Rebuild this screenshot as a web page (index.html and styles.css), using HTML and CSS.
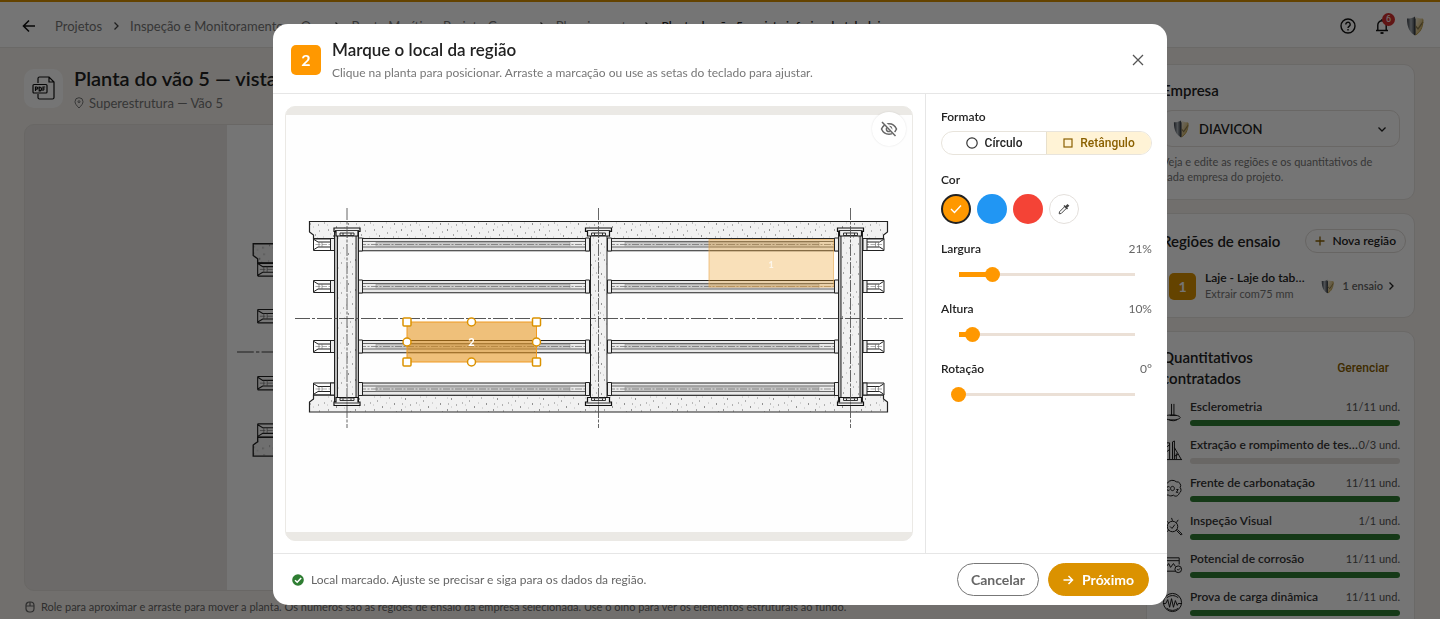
FILE: index.html
```html
<!DOCTYPE html>
<html lang="pt-BR">
<head>
<meta charset="utf-8">
<meta name="viewport" content="width=device-width, initial-scale=1">
<title>Planta do vão 5</title>
<link rel="stylesheet" href="styles.css">
</head>
<body>
<svg class="defs" aria-hidden="true">
  <defs>
    <linearGradient id="shield-l" x1="0" x2="1"><stop offset="0" stop-color="#3c424b"/><stop offset=".5" stop-color="#aeb4bb"/><stop offset="1" stop-color="#3c424b"/></linearGradient>
    <linearGradient id="shield-r" x1="0" x2="1" y1="0" y2="1"><stop offset="0" stop-color="#f3f0e6"/><stop offset="1" stop-color="#c8a03c"/></linearGradient>
    <pattern id="specks" width="46" height="30" patternUnits="userSpaceOnUse">
      <rect width="46" height="30" fill="#f1f1f1"/>
      <path d="M3 4h1M9 11h.7M15 3h.8M14 17h1M21 8h.6M26 14h1M30 4h.8M37 9h1M42 15h.7M44 3h.6M6 20h.8M11 26h1M19 23h.7M25 27h.6M33 20h1M39 25h.8M43 21h.6M2 13h.6M34 14h.6M28 22h.6" stroke="#333"/>
      <path d="M6 7h.7M12 7h.6M18 13h.7M24 5h.6M33 8h.6M40 5h.7M5 15h.6M22 18h.6M37 17h.6M8 24h.6M16 28h.6M30 27h.6M41 28h.6M1 27h.6" stroke="#999"/>
    </pattern>
    <g id="stub">
      <path d="M313.500-6V6M313.500-6h21M313.500 6h21M314-5l4 2.500h12.500M314 5l4-2.500h12.500" fill="none" stroke="#222"/>
      <path d="M315.500 0h18" stroke="#777" stroke-width=".6" stroke-dasharray="5 1.500"/>
      <path d="M319-2.500v5M322-2.500v5" stroke="#666" stroke-width=".6"/>
      <rect x="330.500" y="-6" width="4" height="12" fill="#eee" stroke="#222"/>
    </g>
    <g id="span">
      <rect x="358.500" y="-6" width="231.500" height="12" fill="#e9e9e9"/>
      <path d="M358-6h232M358 6.200h232" stroke="#222" stroke-width="1.100"/>
      <path d="M363-3h222M363 2.500h222" stroke="#444" stroke-width=".8"/>
      <rect x="376" y="-2" width="194" height="4" fill="#cacaca" stroke="#888" stroke-width=".5"/>
      <path d="M359 0h228" stroke="#555" stroke-width=".6" stroke-dasharray="7 1.500 2 1.500"/>
      <path d="M358.500-6.500h4v13h-4zM585.500-6.500h4v13h-4z" fill="#eee" stroke="#222"/>
    </g>
    <g id="beam"><use href="#stub"/><use href="#span"/><use href="#span" x="249"/><use href="#stub" transform="translate(1197.500 0) scale(-1 1)"/></g>
    <g id="cap">
      <path d="M-13-4h26v3.500h-2V4h-22V-.5h-2z" fill="#eee" stroke="#111" stroke-width="1.200"/>
      <path d="M-12-1.500h24M-7 1h14v2.500h-14zM-4 1v2M4 1v2" fill="none" stroke="#222" stroke-width=".9"/>
    </g>
    <symbol id="plan" viewBox="286 115 626 417">
      <rect x="286" y="115" width="626" height="417" fill="#fefefe"/>
      <path d="M309.500 221.500h578V232l-4 3v4h-570v-4l-4-3z" fill="url(#specks)" stroke="#222" stroke-width="1.200"/>
      <path d="M309.500 412h578v-10l-4-3v-4h-570v4l-4 3z" fill="url(#specks)" stroke="#222" stroke-width="1.200"/>
      <use href="#beam" y="244.500"/><use href="#beam" y="286.500"/><use href="#beam" y="346.500"/><use href="#beam" y="389"/>
      <path d="M334.500 232h24v170h-24zM838.500 232h24v170h-24z" fill="#bbb" stroke="#222"/>
      <path d="M337.500 232h18.500v170h-18.500zM590.500 232h16.500v170h-16.500zM841 232h19v170h-19z" fill="url(#specks)" stroke="#222"/>
      <use href="#cap" x="347" y="232"/><use href="#cap" x="598.500" y="232"/><use href="#cap" x="850.500" y="232"/>
      <use href="#cap" transform="translate(347 401.500) scale(1 -1)"/><use href="#cap" transform="translate(598.500 401.500) scale(1 -1)"/><use href="#cap" transform="translate(850.500 401.500) scale(1 -1)"/>
      <path d="M347 208v220M598.500 208v220M850.500 208v220" stroke="#555" stroke-width=".9" stroke-dasharray="12 1.500 3 1.500"/>
      <path d="M295 318.500h608" stroke="#444" stroke-width=".9" stroke-dasharray="15 2 3 2"/>
    </symbol>
    <symbol id="shield" viewBox="0 0 18 20">
      <path d="M1 2.500C4 2.700 6.500 2 9 .5V19.500C4 16.500 1 12 1 2.500z" fill="url(#shield-l)"/>
      <path d="M9 .5c2.500 1.500 5 2.200 8 2C17 12 14 16.500 9 19.500z" fill="url(#shield-r)"/>
      <path d="M9 19V2.500" stroke="#333a43" stroke-width="1.200"/>
      <path d="M9.500 10l2.500 3L17 6" fill="none" stroke="#8a7a50" stroke-width="1.300"/>
      <path d="M17 3.500C17 12 14 16.500 9.500 19" fill="none" stroke="#b99a44" stroke-width="1"/>
    </symbol>
    <symbol id="right" viewBox="0 0 12 12"><path d="M4.500 2.500L8 6 4.500 9.500" fill="none" stroke="currentColor" stroke-width="1.300"/></symbol>
    <symbol id="down" viewBox="0 0 12 12"><path d="M2.500 4.500L6 8l3.500-3.500" fill="none" stroke="currentColor" stroke-width="1.300"/></symbol>
  </defs>
</svg>

<div class="page">
  <header class="topbar">
    <button class="icon-btn back" aria-label="Voltar"><svg width="14" height="14" viewBox="0 0 14 14"><path d="M13 7H1.500M7 1.500L1.500 7 7 12.500" fill="none" stroke="#111" stroke-width="1.600"/></svg></button>
    <nav class="crumbs" aria-label="Navegação">
      <a href="#">Projetos</a><svg class="sep"><use href="#right"/></svg>
      <a href="#">Inspeção e Monitoramento — Oes</a><svg class="sep"><use href="#right"/></svg>
      <a href="#">Ponte Marítima Projeto Gomes</a><svg class="sep"><use href="#right"/></svg>
      <a href="#">Planejamento</a><svg class="sep"><use href="#right"/></svg>
      <b>Planta do vão 5 — vista inferior do tabuleiro</b>
    </nav>
    <div class="top-actions">
      <button class="icon-btn" aria-label="Ajuda"><svg width="16" height="16" viewBox="0 0 16 16" fill="none" stroke="#111" stroke-width="1.400"><circle cx="8" cy="8" r="7"/><path d="M5.800 6.500a2.200 2.200 0 1 1 3.500 1.700c-.9.600-1.300 1-1.300 1.800M8 11v1.500"/></svg></button>
      <button class="icon-btn bell" aria-label="Notificações"><svg width="14" height="16" viewBox="0 0 14 16" fill="none" stroke="#111" stroke-width="1.400"><path d="M1 12.500h12M2.800 12.500V7a4.200 4.200 0 0 1 8.400 0v5.500M7 1v1.800"/><path d="M5.500 15h3" stroke-width="1.800"/></svg><span class="count">6</span></button>
      <svg class="shield" width="18" height="20"><use href="#shield"/></svg>
    </div>
  </header>

  <div class="content">
    <main class="main">
      <div class="plan-head">
        <span class="pdf"><svg width="24" height="26" viewBox="0 0 24 26" fill="none" stroke="#111" stroke-width="1.200"><path d="M6 8V3.500A1.500 1.500 0 0 1 7.500 2H17l5 5v15.500a1.500 1.500 0 0 1-1.500 1.500h-13A1.500 1.500 0 0 1 6 22.500V19M17 2v5h5"/><rect x="1" y="9.500" width="14" height="8.500" rx="1"/><path d="M3.500 16v-4h1.200a1 1 0 0 1 0 2.200H3.500M7.200 12v4c3 0 3-4 0-4zM11 16v-4h2.200M11 14h1.800"/></svg></span>
        <div>
          <h1>Planta do vão 5 — vista inferior do tabuleiro</h1>
          <p class="place"><svg width="10" height="12" viewBox="0 0 10 12" fill="none" stroke="currentColor"><path d="M5 11C2.500 8.500 1 6.500 1 4.700a4 4 0 0 1 8 0C9 6.500 7.500 8.500 5 11z"/><circle cx="5" cy="4.700" r="1"/></svg>Superestrutura — Vão 5</p>
        </div>
      </div>
      <div class="viewer"><svg class="viewer-plan" viewBox="0 0 626 417"><use href="#plan" width="626" height="417"/></svg></div>
      <p class="hint"><svg width="10" height="12" viewBox="0 0 10 12" fill="none" stroke="currentColor" stroke-width="1.200"><rect x="1" y="1" width="8" height="10" rx="3.500"/><path d="M1 5h8M5 1v4"/></svg>Role para aproximar e arraste para mover a planta. Os números são as regiões de ensaio da empresa selecionada. Use o olho para ver os elementos estruturais ao fundo.</p>
    </main>

    <aside class="rail">
      <section class="card">
        <h2><label for="empresa">Empresa</label></h2>
        <div class="company">
          <svg class="shield" width="16" height="18"><use href="#shield"/></svg>
          <select id="empresa"><option>DIAVICON</option></select>
          <svg class="chev"><use href="#down"/></svg>
        </div>
        <p class="note">Veja e edite as regiões e os quantitativos de cada empresa do projeto.</p>
      </section>

      <section class="card regions">
        <div class="card-head"><h2>Regiões de ensaio</h2><button class="new"><svg width="10" height="10" viewBox="0 0 10 10"><path d="M5 .5v9M.5 5h9" stroke="#8a6000" stroke-width="1.300"/></svg>Nova região</button></div>
        <div class="region-row">
          <span class="num">1</span>
          <div class="region-text"><b>Laje - Laje do tabuleiro</b><span>Extrair com75 mm</span></div>
          <svg class="shield" width="13" height="15"><use href="#shield"/></svg>
          <span class="tests">1 ensaio</span><svg class="sep"><use href="#right"/></svg>
        </div>
      </section>

      <section class="card quant">
        <div class="card-head"><h2>Quantitativos contratados</h2><button class="manage">Gerenciar</button></div>
        <ul class="tests-list">
          <li><svg class="ti" viewBox="0 0 22 22"><path d="M10 2v12M12.500 2v12M8 14h7M4 15c0-2 14-2 15 1s-14 4-15 1M7 18.500c3 1.500 7 1.500 9 0"/></svg><div class="test"><div class="test-line"><b>Esclerometria</b><span>11/11 und.</span></div><div class="bar full"></div></div></li>
          <li><svg class="ti" viewBox="0 0 22 22"><path d="M4 20V3h4v17M8 5l-4 3M8 10l-4 3M11 20V2l2-1v19M13 8l7 12M15 14v6M2 20.500h19M17 15l-4 2"/></svg><div class="test"><div class="test-line"><b>Extração e rompimento de testemunhos</b><span>0/3 und.</span></div><div class="bar"></div></div></li>
          <li><svg class="ti" viewBox="0 0 22 22"><path d="M7 18a4 4 0 0 1-4-6 4 4 0 0 1 3-7 6 6 0 0 1 9-1 4 4 0 0 1 4 6 4 4 0 0 1-1 6c-1 3-4 4-6 2-2 1-4 1-5 0zM8 9.500a2 2 0 1 0 0 3M13 11c0 3-4 3-4 0s4-3 4 0M15 12h2l-2 3h2"/></svg><div class="test"><div class="test-line"><b>Frente de carbonatação</b><span>11/11 und.</span></div><div class="bar full"></div></div></li>
          <li><svg class="ti" viewBox="0 0 22 22"><circle cx="11" cy="11" r="5.500"/><path d="M8.500 11l2 2 3-4M15 15l5 5 1-1-5-5M3 4l4 3M2 12h3M10 2l1 3M17 4l-2 3M3 18l4-3"/></svg><div class="test"><div class="test-line"><b>Inspeção Visual</b><span>1/1 und.</span></div><div class="bar full"></div></div></li>
          <li><svg class="ti" viewBox="0 0 22 22"><path d="M14 18H2V4h16v7M2 7h16M4 14l3-4 2 4 3-4 2 3"/><circle cx="17" cy="16" r="3.500"/><path d="M16 16l1 1 2-2"/></svg><div class="test"><div class="test-line"><b>Potencial de corrosão</b><span>11/11 und.</span></div><div class="bar full"></div></div></li>
          <li><svg class="ti" viewBox="0 0 22 22"><circle cx="11" cy="11" r="9.500"/><path d="M1 12h3l2-4 2 8 2-9 2 9 2-7 2 5 1-2h4M5 6c4-3 8-3 12 0M5 17c4 3 8 3 12 0"/></svg><div class="test"><div class="test-line"><b>Prova de carga dinâmica</b><span>11/11 und.</span></div><div class="bar full"></div></div></li>
        </ul>
      </section>
    </aside>
  </div>
</div>

<div class="backdrop">
  <section class="dialog" role="dialog" aria-modal="true" aria-labelledby="dlg-title">
    <header class="dlg-head">
      <span class="step">2</span>
      <div class="dlg-titles"><h2 id="dlg-title">Marque o local da região</h2><p>Clique na planta para posicionar. Arraste a marcação ou use as setas do teclado para ajustar.</p></div>
      <button class="icon-btn" aria-label="Fechar"><svg width="12" height="12" viewBox="0 0 12 12"><path d="M1 1l10 10M11 1L1 11" stroke="#555" stroke-width="1.300"/></svg></button>
    </header>

    <div class="dlg-body">
      <div class="stage-wrap">
        <div class="stage">
          <svg class="stage-plan" viewBox="286 115 626 417">
            <use href="#plan" x="286" y="115" width="626" height="417"/>
            <rect x="709" y="239.500" width="124.500" height="47.500" fill="#ed9a1c" fill-opacity=".3" stroke="#e8a94e" stroke-opacity=".6"/>
            <text class="mark faint" x="771" y="268">1</text>
            <rect x="407" y="322" width="129.500" height="40" fill="#e28c0c" fill-opacity=".55" stroke="#f09a20"/>
            <text class="mark" x="471.500" y="346">2</text>
            <g class="handles"><rect x="403" y="318" width="8" height="8" rx="1"/><rect x="532.500" y="318" width="8" height="8" rx="1"/><rect x="403" y="358" width="8" height="8" rx="1"/><rect x="532.500" y="358" width="8" height="8" rx="1"/><circle cx="471.500" cy="322" r="4"/><circle cx="471.500" cy="362" r="4"/><circle cx="407" cy="342" r="4"/><circle cx="536.500" cy="342" r="4"/></g>
          </svg>
          <button class="eye" aria-label="Ocultar elementos"><svg width="18" height="16" viewBox="0 0 18 16" fill="none" stroke="#666" stroke-width="1.500"><path d="M1.500 8C3 4.500 5.700 2.800 9 2.800S15 4.500 16.500 8C15 11.500 12.300 13.200 9 13.200S3 11.500 1.500 8z"/><circle cx="9" cy="8" r="2.600"/><path d="M3.500.8l12 13.500" stroke="#fff" stroke-width="3"/><path d="M2 1l13.500 14"/></svg></button>
        </div>
      </div>

      <form class="controls">
        <fieldset>
          <legend>Formato</legend>
          <div class="segmented">
            <button type="button" aria-pressed="false"><svg width="12" height="12" viewBox="0 0 12 12"><circle cx="6" cy="6" r="5.200" fill="none" stroke="#333" stroke-width="1.200"/></svg>Círculo</button>
            <button type="button" class="on" aria-pressed="true"><svg width="10" height="10" viewBox="0 0 10 10"><rect x="1" y="1" width="8" height="8" fill="none" stroke="#8a6000" stroke-width="1.200"/></svg>Retângulo</button>
          </div>
        </fieldset>
        <fieldset>
          <legend>Cor</legend>
          <div class="swatches">
            <button type="button" class="swatch orange" aria-label="Laranja"><svg width="12" height="10" viewBox="0 0 12 10"><path d="M1 5l3.500 3.500L11 1.500" fill="none" stroke="#fff" stroke-width="1.400"/></svg></button>
            <button type="button" class="swatch blue" aria-label="Azul"></button>
            <button type="button" class="swatch red" aria-label="Vermelho"></button>
            <button type="button" class="swatch pick" aria-label="Outra cor"><svg width="12" height="12" viewBox="0 0 12 12" fill="none" stroke="#444"><path d="M1.200 10.800l.3-2L7 3.300 8.700 5l-5.500 5.500z"/><path d="M6 2.500L9.500 6M8 3.500L9.500 2l.8.800L8.800 4.300z" stroke-width="1.500"/></svg></button>
          </div>
        </fieldset>
        <div class="slider"><label for="w">Largura</label><output for="w">21%</output><input id="w" type="range" min="2" max="100" value="21" style="--fill:.19"></div>
        <div class="slider"><label for="h">Altura</label><output for="h">10%</output><input id="h" type="range" min="2" max="100" value="10" style="--fill:.08"></div>
        <div class="slider"><label for="r">Rotação</label><output for="r">0°</output><input id="r" type="range" min="0" max="360" value="0" style="--fill:0"></div>
      </form>
    </div>

    <footer class="dlg-foot">
      <svg width="12" height="12" viewBox="0 0 12 12"><circle cx="6" cy="6" r="5.800" fill="#2e7d32"/><path d="M3 6.200l2.200 2.100L9.200 4" fill="none" stroke="#fff" stroke-width="1.500"/></svg>
      <p>Local marcado. Ajuste se precisar e siga para os dados da região.</p>
      <div class="actions">
        <button class="btn">Cancelar</button>
        <button class="btn primary"><svg width="11" height="10" viewBox="0 0 11 10"><path d="M.5 5h9M5.500 1l4 4-4 4" fill="none" stroke="#fff" stroke-width="1.500"/></svg>Próximo</button>
      </div>
    </footer>
  </section>
</div>
</body>
</html>
```
FILE: styles.css
```css
* { box-sizing: border-box; }
html, body { height: 100%; margin: 0; }
body {
  overflow: hidden;
  background: #f6f2ee;
  color: #222;
  font: 12px/16px Lato, "Open Sans", sans-serif;
}
h1, h2, p, ul, fieldset { margin: 0; padding: 0; border: 0; }
h1, h2, b { font-weight: 600; }
ul { list-style: none; }
a { color: inherit; text-decoration: none; }
button { font: inherit; color: inherit; border: 0; background: none; padding: 0; }
svg { flex: none; display: block; }
.defs { position: absolute; width: 0; height: 0; }
.sep, .chev { width: 12px; height: 12px; }
.icon-btn { display: grid; place-items: center; width: 20px; height: 20px; }

/* Page */
.page { height: 100%; overflow: hidden; }
.topbar {
  display: flex;
  align-items: center;
  gap: 16px;
  height: 48px;
  padding: 2px 16px 0 19px;
  border-top: 2px solid #db9200;
  border-bottom: 1px solid #e8e4e0;
  background: #fff;
}
.crumbs { display: flex; align-items: center; gap: 8px; flex: 1; font-size: 13px; color: #777; white-space: nowrap; }
.crumbs b { color: #222; font-size: 12px; }
.crumbs .sep { color: #444; }
.top-actions { display: flex; align-items: center; gap: 14px; }
.bell { position: relative; }
.count {
  position: absolute;
  top: -3px;
  right: -3px;
  width: 13px;
  border-radius: 7px;
  background: #d32f2f;
  color: #fff;
  font: 9px/13px Roboto, sans-serif;
}
.content { display: grid; grid-template-columns: minmax(0, 1fr) 269px; gap: 17px; padding: 16px 25px 0 24px; }
.main { padding-top: 4px; }
.plan-head { display: flex; align-items: center; gap: 11px; height: 40px; }
.pdf { display: grid; place-items: center; width: 39px; height: 39px; border-radius: 10px; background: #fff; }
h1 { font-size: 20px; line-height: 26px; white-space: nowrap; }
.place { display: flex; align-items: center; gap: 5px; padding: 4px 0 0; font-size: 13px; color: #777; }
.viewer {
  display: flex;
  justify-content: center;
  height: calc(100vh - 152px);
  margin-top: 16px;
  overflow: hidden;
  border: 1px solid #e4e0dc;
  border-radius: 10px;
  background: #ebe8e4;
}
.viewer-plan { height: 100%; }
.hint { display: flex; align-items: center; gap: 6px; padding: 8px 0 0 1px; font-size: 11px; color: #666; white-space: nowrap; }

/* Side rail */
.rail { display: flex; flex-direction: column; gap: 13px; }
.card { padding: 15px 14px 15px 15px; border: 1px solid #e8e4e0; border-radius: 11px; background: #fff; }
.card h2 { font-size: 15px; line-height: 21px; }
.company {
  display: flex;
  align-items: center;
  gap: 10px;
  height: 37px;
  margin-top: 9px;
  padding: 0 11px 0 10px;
  border: 1px solid #e4e0dc;
  border-radius: 10px;
}
.company select { flex: 1; appearance: none; border: 0; background: none; padding: 0; font: 600 13px/16px Lato, sans-serif; color: #222; }
.note { padding: 7px 20px 0 0; font-size: 11px; line-height: 15px; color: #777; }
.card-head { display: flex; align-items: center; justify-content: space-between; gap: 8px; }
.card.regions { padding: 15px 8px 15px 15px; }
.new { display: flex; align-items: center; gap: 7px; padding: 0 9px; border: 1px solid #e0dcd8; border-radius: 12px; font-weight: 600; line-height: 22px; white-space: nowrap; }
.region-row { display: flex; align-items: center; gap: 9px; padding: 0 9px 0 7px; margin-top: 17px; height: 32px; }
.num { width: 27px; border-radius: 5px; background: #db9200; color: #fff; font-weight: 700; font-size: 14px; line-height: 27px; text-align: center; }
.region-text { flex: 1; min-width: 0; color: #777; white-space: nowrap; font-size: 11px; }
.region-text b { display: block; overflow: hidden; text-overflow: ellipsis; color: #222; font-size: 12px; }
.region-text span { display: block; }
.tests { color: #666; white-space: nowrap; font-size: 11px; font-weight: 600; }
.region-row .shield { margin-left: 3px; }
.region-row .sep { margin-left: -7px; }
.manage { padding: 0 11px; color: #8a6000; font: 500 12px/16px Roboto, sans-serif; }
.tests-list { padding-top: 4px; }
.tests-list li { display: flex; align-items: center; gap: 7px; height: 38px; }
.ti { width: 21px; height: 21px; fill: none; stroke: #111; stroke-width: 1; }
.test { flex: 1; min-width: 0; }
.test-line { display: flex; justify-content: space-between; white-space: nowrap; font-size: 11px; color: #555; }
.test-line b { overflow: hidden; text-overflow: ellipsis; color: #333; font-size: 12px; }
.bar { height: 6px; margin-top: 5px; border-radius: 3px; background: #e4e0dc; }
.bar.full { background: #2e7d32; }

/* Dialog */
.backdrop {
  position: fixed;
  inset: 0;
  display: flex;
  justify-content: center;
  padding: 24px 24px 14px;
  background: rgba(0, 0, 0, .54);
}
.dialog { display: flex; flex-direction: column; width: 100%; max-width: 894px; border-radius: 15px; background: #fff; overflow: hidden; }
.dlg-head { display: flex; align-items: center; gap: 11px; padding: 14px 19px 12px 18px; border-bottom: 1px solid #e6e6e6; }
.step { width: 30px; border-radius: 5px; background: #ff9800; color: #fff; font-weight: 700; font-size: 16px; line-height: 30px; text-align: center; }
.dlg-titles { flex: 1; }
.dlg-titles h2 { font-size: 17px; line-height: 23px; }
.dlg-titles p { padding-top: 4px; color: #777; }
.dlg-body { display: flex; flex: 1; min-height: 0; }
.stage-wrap { flex: 1; min-width: 0; padding: 12px; }
.stage { position: relative; height: 100%; display: flex; align-items: center; border: 1px solid #ebe9e5; border-radius: 10px; background: #ebe9e5; overflow: hidden; }
.stage-plan { width: 100%; }
.mark { fill: #fff; font: 900 11px Lato, sans-serif; text-anchor: middle; }
.faint { fill-opacity: .7; font-size: 9px; }
.handles { fill: #fff; stroke: #db9200; stroke-width: 1.5px; }
.eye { position: absolute; top: 5px; right: 6px; display: grid; place-items: center; width: 34px; height: 34px; border-radius: 50%; background: #fff; box-shadow: 0 0 2px rgba(0, 0, 0, .12); }
.controls { width: 242px; padding: 15px; border-left: 1px solid #e6e6e6; }
legend { padding: 0; font-weight: 600; }
.segmented { display: flex; height: 24px; margin-top: 6px; border: 1px solid #e8e4dc; border-radius: 12px; overflow: hidden; }
.segmented button { flex: 1; display: flex; align-items: center; justify-content: center; gap: 7px; font: 500 12px/16px Roboto, sans-serif; }
.segmented .on { border-left: 1px solid #e8e0cc; background: #fff3d6; color: #8a6000; }
.swatches { display: flex; gap: 6px; margin: 6px 0 17px; }
fieldset + fieldset { margin-top: 17px; }
.swatch { display: grid; place-items: center; width: 30px; height: 30px; border-radius: 50%; }
.orange { border: 2px solid #222; background: #ff9800; }
.blue { background: #2196f3; }
.red { background: #f44336; }
.pick { border: 1px solid #e4e0dc; }
.slider { display: grid; grid-template-columns: 1fr auto; align-content: start; font-weight: 600; height: 60px; }
.slider output { font-weight: 400; color: #666; }
.slider input {
  grid-column: 1 / -1;
  appearance: none;
  height: 15px;
  margin: 10px 10px 0;
  background:
    linear-gradient(#ff9800, #ff9800) 8px center / calc((100% - 15px) * var(--fill)) 5px no-repeat,
    linear-gradient(#ebe0d6, #ebe0d6) center / calc(100% - 15px) 3px no-repeat;
}
.slider input::-webkit-slider-thumb { appearance: none; width: 15px; height: 15px; border-radius: 50%; background: #ff9800; }
.dlg-foot { display: flex; align-items: center; gap: 7px; padding: 9px 18px 9px 19px; border-top: 1px solid #e6e6e6; }
.dlg-foot p { flex: 1; color: #666; }
.actions { display: flex; gap: 9px; }
.btn { display: flex; align-items: center; gap: 8px; padding: 0 13px; border: 1px solid #777; border-radius: 17px; color: #666; font-weight: 700; font-size: 14px; line-height: 31px; }
.primary { padding: 0 14px; border-color: #db9200; background: #db9200; color: #fff; }
```
